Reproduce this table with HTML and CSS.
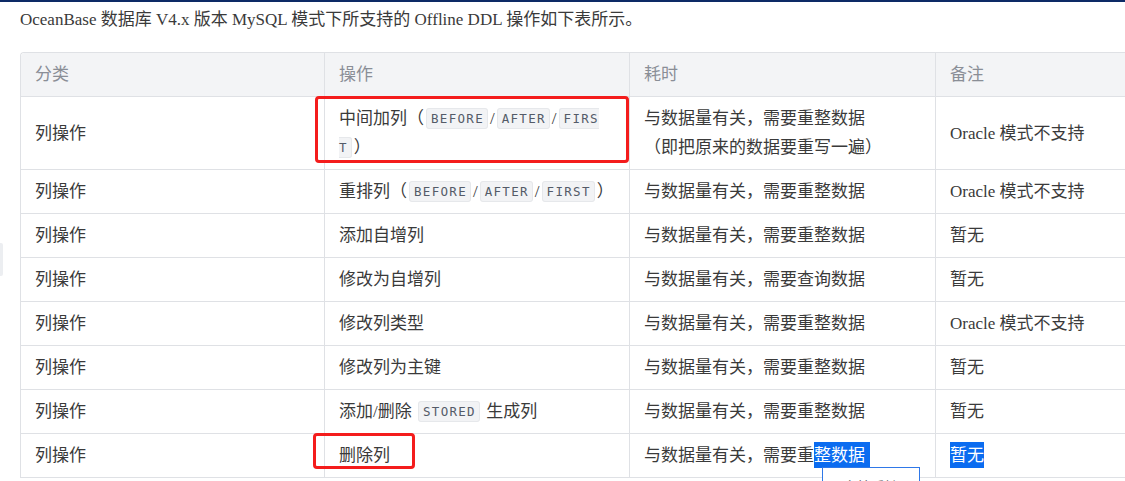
FILE: index.html
```html
<!DOCTYPE html>
<html lang="zh-CN">
<head>
<meta charset="utf-8">
<title>Offline DDL</title>
<link rel="stylesheet" href="styles.css">
</head>
<body>
<div class="topbar"></div>
<div class="side-tab"></div>
<main class="content">
  <p class="intro">OceanBase 数据库 V4.x 版本 MySQL 模式下所支持的 Offline DDL 操作如下表所示。</p>
  <div class="table-wrap">
    <table class="ddl">
      <colgroup>
        <col class="c1"><col class="c2"><col class="c3"><col class="c4">
      </colgroup>
      <thead>
        <tr><th>分类</th><th>操作</th><th>耗时</th><th>备注</th></tr>
      </thead>
      <tbody>
        <tr>
          <td>列操作</td>
          <td>中间加列（<code>BEFORE</code>/<code>AFTER</code>/<code>FIRS<br>T</code>）</td>
          <td>与数据量有关，需要重整数据<br>（即把原来的数据要重写一遍）</td>
          <td>Oracle 模式不支持</td>
        </tr>
        <tr>
          <td>列操作</td>
          <td>重排列（<code>BEFORE</code>/<code>AFTER</code>/<code>FIRST</code>）</td>
          <td>与数据量有关，需要重整数据</td>
          <td>Oracle 模式不支持</td>
        </tr>
        <tr><td>列操作</td><td>添加自增列</td><td>与数据量有关，需要重整数据</td><td>暂无</td></tr>
        <tr><td>列操作</td><td>修改为自增列</td><td>与数据量有关，需要查询数据</td><td>暂无</td></tr>
        <tr><td>列操作</td><td>修改列类型</td><td>与数据量有关，需要重整数据</td><td>Oracle 模式不支持</td></tr>
        <tr><td>列操作</td><td>修改列为主键</td><td>与数据量有关，需要重整数据</td><td>暂无</td></tr>
        <tr><td>列操作</td><td>添加/删除 <code>STORED</code> 生成列</td><td>与数据量有关，需要重整数据</td><td>暂无</td></tr>
        <tr><td>列操作</td><td>删除列</td><td>与数据量有关，需要重<span class="sel sel-tail">整数据</span></td><td><span class="sel">暂无</span></td></tr>
      </tbody>
    </table>
    <div class="mark mark-1"></div>
    <div class="mark mark-2"></div>
    <div class="popup">文档反馈</div>
  </div>
</main>
</body>
</html>
```

FILE: styles.css
```css
html, body {
  margin: 0;
  padding: 0;
  background: #ffffff;
  overflow: hidden;
}
body {
  font-family: "Liberation Serif", "Noto Sans CJK SC", serif;
  font-size: 17px;
  color: #3a3a3a;
  width: 1125px;
  height: 481px;
  position: relative;
}
.topbar {
  height: 2px;
  background: #0d2a66;
}
.side-tab {
  position: absolute;
  left: 0;
  top: 243px;
  width: 3px;
  height: 33px;
  background: #eceef1;
  border-radius: 0 2px 2px 0;
}
.content {
  padding-left: 20px;
}
.intro {
  margin: 4px 0 0;
  line-height: 28px;
}
.table-wrap {
  position: relative;
  margin-top: 18px;
}
.ddl {
  width: 1220px;
  border-collapse: separate;
  border-spacing: 0;
  border-top: 1px solid #dfe1e5;
  border-left: 1px solid #dfe1e5;
  border-radius: 4px 0 0 0;
  table-layout: fixed;
}
.c1 { width: 304px; }
.c2 { width: 305px; }
.c3 { width: 306px; }
.c4 { width: 305px; }
.ddl th, .ddl td {
  border-right: 1px solid #dfe1e5;
  border-bottom: 1px solid #dfe1e5;
  padding: 7px 14px;
  height: 29px;
  line-height: 29px;
  text-align: left;
  vertical-align: middle;
}
.ddl th {
  background: #f3f4f6;
  color: #8a8e96;
  font-weight: normal;
}
.ddl th:first-child {
  border-radius: 4px 0 0 0;
}
.ddl code {
  font-family: "DejaVu Sans Mono", monospace;
  font-size: 12.5px;
  line-height: 14px;
  vertical-align: 1px;
  letter-spacing: 1.3px;
  color: #545b68;
  background: #f2f3f5;
  border: 1px solid #e6e8eb;
  border-radius: 3px;
  padding: 2px 3px 2px 4px;
  margin: 0 2px;
}
.sel {
  background: #0b6cf0;
  color: #ffffff;
  padding: 4px 0 3px;
}
.sel-tail {
  padding-right: 5px;
}
.mark {
  position: absolute;
  border: 3px solid #f41c1c;
  border-radius: 4px;
}
.mark-1 {
  left: 295px;
  top: 44px;
  width: 308px;
  height: 61px;
}
.mark-2 {
  left: 293px;
  top: 381px;
  width: 96px;
  height: 30px;
}
.popup {
  position: absolute;
  left: 802px;
  top: 415px;
  width: 98px;
  height: 40px;
  border: 1px solid #2f78e8;
  background: #ffffff;
  color: #666;
  font-size: 14px;
  padding: 8px 0 0 20px;
  box-sizing: border-box;
}
```
